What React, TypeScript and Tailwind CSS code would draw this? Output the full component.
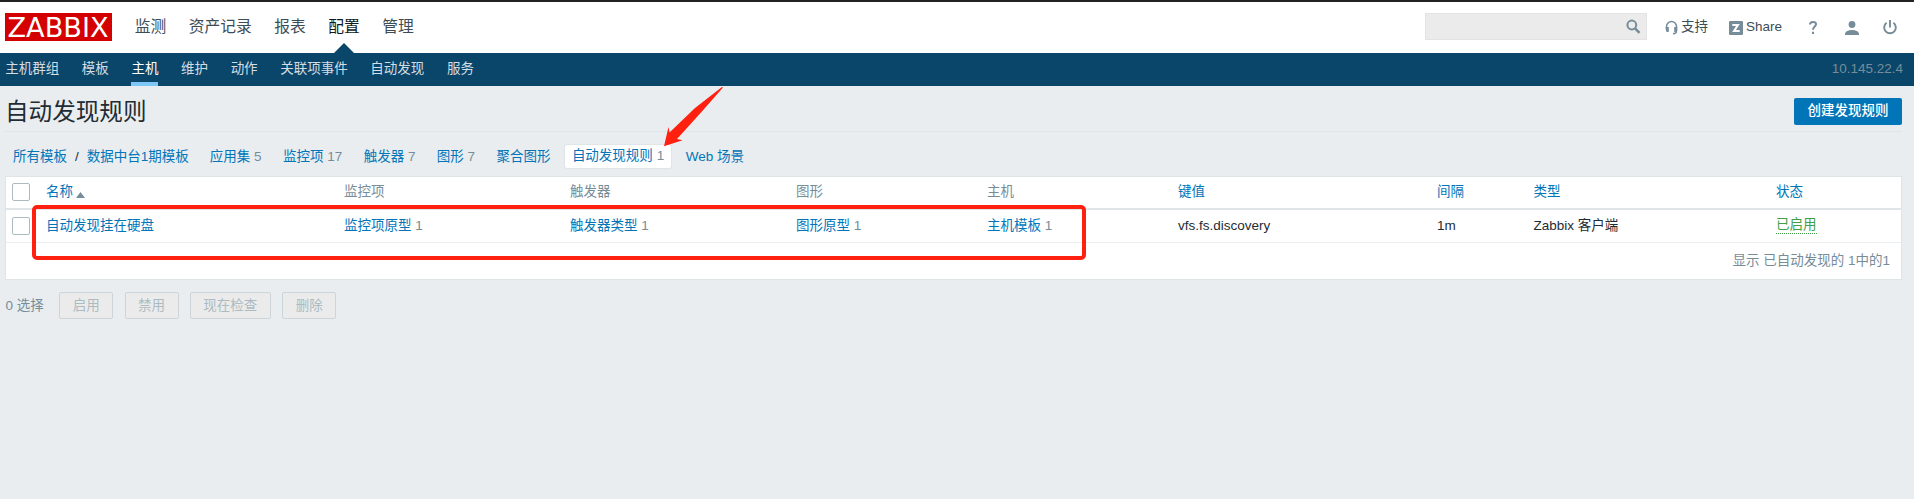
import React from "react";

const nav = [
  { label: "监测", width: "w-[54px]" },
  { label: "资产记录", width: "w-[85.5px]" },
  { label: "报表", width: "w-[54px]" },
  { label: "配置", width: "w-[54px]", active: true },
  { label: "管理", width: "w-[54px]" },
];

const subnav = ["主机群组", "模板", "主机", "维护", "动作", "关联项事件", "自动发现", "服务"];

const tabs = [
  { label: "应用集", count: 5 },
  { label: "监控项", count: 17 },
  { label: "触发器", count: 7 },
  { label: "图形", count: 7 },
  { label: "聚合图形" },
  { label: "自动发现规则", count: 1, active: true },
  { label: "Web 场景" },
];

const grid =
  "grid grid-cols-[40px_298px_226px_226px_191px_191px_259px_96.5px_242.5px_1fr]";

function Count({ n }: { n: number }) {
  return <span className="text-[#768d99]"> {n}</span>;
}

function Checkbox() {
  return <span className="ml-[6px] block h-[18px] w-[18px] rounded-[2px] border border-[#acbbc2] bg-white" />;
}

function Button({ children }: { children: React.ReactNode }) {
  return (
    <button className="h-[27px] rounded-[2px] border border-[#ccd5d9] bg-[#ebebeb] px-[12.5px] leading-[25px] text-[#acbbc2]">
      {children}
    </button>
  );
}

export default function App() {
  return (
    <div className="relative h-[499px] w-full overflow-hidden whitespace-nowrap bg-[#e9edf0] font-['Liberation_Sans','Noto_Sans_CJK_SC',sans-serif] text-[13.5px] leading-[18px] text-[#1f2c33]">
      <header className="flex h-[53px] items-start border-t-2 border-[#222] bg-white">
        <div className="ml-[5px] mt-[11px] flex h-[28px] w-[107px] items-center justify-center bg-[#d40000]">
          <svg className="shrink-0" width="107" height="40" viewBox="0 -6 107 40">
            <text x="2.5" y="23.7" textLength="101" lengthAdjust="spacingAndGlyphs" fontFamily="DejaVu Sans" fontSize="27" fill="#fff">ZABBIX</text>
          </svg>
        </div>
        <nav className="ml-[11.5px] flex h-[51px] text-[15.75px] leading-[50px] text-[#3c4d57]">
          {nav.map((n) => (
            <a key={n.label} className={n.active ? "relative flex w-[54px] justify-center text-[#0e1a20]" : n.width + " flex justify-center"}>
              {n.label}
              {n.active && (
                <svg className="absolute bottom-0 left-[17px]" width="20" height="10" viewBox="0 0 20 10">
                  <path d="M0 10 10 0l10 10z" fill="#0a466a" />
                </svg>
              )}
            </a>
          ))}
        </nav>
        <div className="ml-auto flex h-[49px] items-center text-[#3c4d57]">
          <div className="flex h-[27px] w-[222px] items-center justify-end border border-[#e3e3e3] bg-[#ebebeb] pr-[5px]">
            <svg width="16" height="16" viewBox="0 0 16 16" fill="none" stroke="#768d99">
              <circle cx="6.8" cy="6" r="4.4" strokeWidth="2" />
              <path d="m10 9.3 4.5 4.5" strokeWidth="2.4" />
            </svg>
          </div>
          <a className="ml-[18px] flex items-center">
            <svg className="mt-[2px]" width="13" height="15" viewBox="0 0 13 15">
              <path d="M1.500 9V6.500a5 5 0 0 1 10 0V11q0 2.500-3.500 2.700" fill="none" stroke="#768d99" strokeWidth="1.500" />
              <path d="M.8 7h3v5H2.500Q.8 12 .8 10zM12.200 7h-3v5h1.300q1.700 0 1.700-2z" fill="#768d99" />
            </svg>
            <span className="ml-[3px]">支持</span>
          </a>
          <a className="ml-[21px] flex items-center">
            <svg className="mt-[2px]" width="14" height="14" viewBox="0 0 14 14">
              <rect width="14" height="14" rx="1" fill="#768d99" />
              <path d="M3.300 3.900H9L5 10.100h5.700" fill="none" stroke="#fff" strokeWidth="2" />
            </svg>
            <span className="ml-[3px]">Share</span>
          </a>
          <svg className="ml-[26px] mt-[2px]" width="10" height="15" viewBox="0 0 10 15" fill="none" stroke="#768d99" strokeWidth="2">
            <path d="M2 4.500Q2 2 5 2t3 2.300C8 6.500 5 6.500 5 9.800M5 11.700V14" />
          </svg>
          <svg className="ml-[27px] mt-[2px]" width="14" height="14" viewBox="0 0 14 14" fill="#768d99">
            <circle cx="7" cy="3.500" r="3.400" />
            <path d="M0 14v-1.500Q1 9 7 9t7 3.500V14z" />
          </svg>
          <svg className="ml-[24px] mr-[17px] mt-[1px]" width="14" height="15" viewBox="0 0 14 15" fill="none" stroke="#768d99" strokeWidth="1.900">
            <path d="M3.600 2.800a5.800 5.800 0 1 0 6.800 0M7 0v7.500" />
          </svg>
        </div>
      </header>

      <nav className="flex h-[33px] items-start bg-[#0a466a] pl-[5.25px] pr-[11px] leading-[32px] text-[#d3dde3]">
        {subnav.map((s) => (
          <a key={s} className={s === "主机" ? "mr-[22.6px] h-[33px] border-b-4 border-[#7dc6f5] text-white" : "mr-[22.6px]"}>
            {s}
          </a>
        ))}
        <span className="ml-auto text-[#768d99]">10.145.22.4</span>
      </nav>

      <div className="ml-[5px] mr-[12px] flex h-[46px] justify-between border-b border-[#dfe4e7]">
        <h1 className="text-[23.6px] leading-[52px]">自动发现规则</h1>
        <button className="mt-[12px] h-[27px] w-[108px] rounded-[2px] bg-[#0275b8] pb-[2px] font-medium text-white">创建发现规则</button>
      </div>

      <div className="flex h-[44px] items-center pl-[13px] pt-[5px] text-[#0275b8]">
        <a>所有模板</a>
        <span className="mx-[8px] text-[#1f2c33]">/</span>
        <a className="mr-[10.5px]">数据中台1期模板</a>
        {tabs.map((t) => (
          <a
            key={t.label}
            className={
              t.active
                ? "ml-[3.5px] mr-[4px] whitespace-pre rounded-[2px] bg-white px-[7px] pb-[3px] pt-[2px] shadow-[0_0_1px_1px_#dfe4e7]"
                : "mr-[0.4px] whitespace-pre px-[10.5px]"
            }
          >
            {t.label}
            {t.count && <Count n={t.count} />}
          </a>
        ))}
      </div>

      <div className="ml-[5px] mr-[12px] border border-[#dfe4e7] bg-white">
        <div className={grid + " h-[33px] items-center border-b-2 border-[#dfe4e7] pb-[1px] text-[#768d99]"}>
          <Checkbox />
          <a className="flex items-center text-[#0275b8]">
            名称
            <svg className="ml-[3px] mt-[5px]" width="9" height="6" viewBox="0 0 9 6">
              <path d="M0 6 4.500 0 9 6z" fill="#768d99" />
            </svg>
          </a>
          <span>监控项</span>
          <span>触发器</span>
          <span>图形</span>
          <span>主机</span>
          <a className="text-[#0275b8]">键值</a>
          <a className="text-[#0275b8]">间隔</a>
          <a className="text-[#0275b8]">类型</a>
          <a className="text-[#0275b8]">状态</a>
        </div>
        <div className={grid + " h-[33px] items-center border-b border-[#ebeef0] pb-[1px]"}>
          <Checkbox />
          <a className="text-[#0275b8]">自动发现挂在硬盘</a>
          <a className="whitespace-pre text-[#0275b8]">监控项原型<Count n={1} /></a>
          <a className="whitespace-pre text-[#0275b8]">触发器类型<Count n={1} /></a>
          <a className="whitespace-pre text-[#0275b8]">图形原型<Count n={1} /></a>
          <a className="whitespace-pre text-[#0275b8]">主机模板<Count n={1} /></a>
          <span>vfs.fs.discovery</span>
          <span>1m</span>
          <span>Zabbix 客户端</span>
          <a className="justify-self-start border-b border-dotted border-[#429e47] leading-[16px] text-[#429e47]">已启用</a>
        </div>
        <div className="h-[36px] pr-[11px] text-right leading-[35px] text-[#768d99]">显示 已自动发现的 1中的1</div>
      </div>

      <div className="ml-[5.5px] mt-[12px] flex items-center">
        <span className="mr-[15.5px] text-[#768d99]">0 选择</span>
        <div className="flex gap-[11.3px]">
          <Button>启用</Button>
          <Button>禁用</Button>
          <Button>现在检查</Button>
          <Button>删除</Button>
        </div>
      </div>

      <div className="absolute left-[32px] top-[205px] h-[55px] w-[1054px] rounded-[5px] border-4 border-[#ff2010]" />
      <svg className="absolute left-[660px] top-[84px]" width="70" height="66" viewBox="0 0 70 66">
        <path d="M62 3 35 24 9.500 48.500 8.500 43 4 62.300 22.500 56.300 17 55 41 28.500 63 3.500z" fill="#ff2010" />
      </svg>
    </div>
  );
}
